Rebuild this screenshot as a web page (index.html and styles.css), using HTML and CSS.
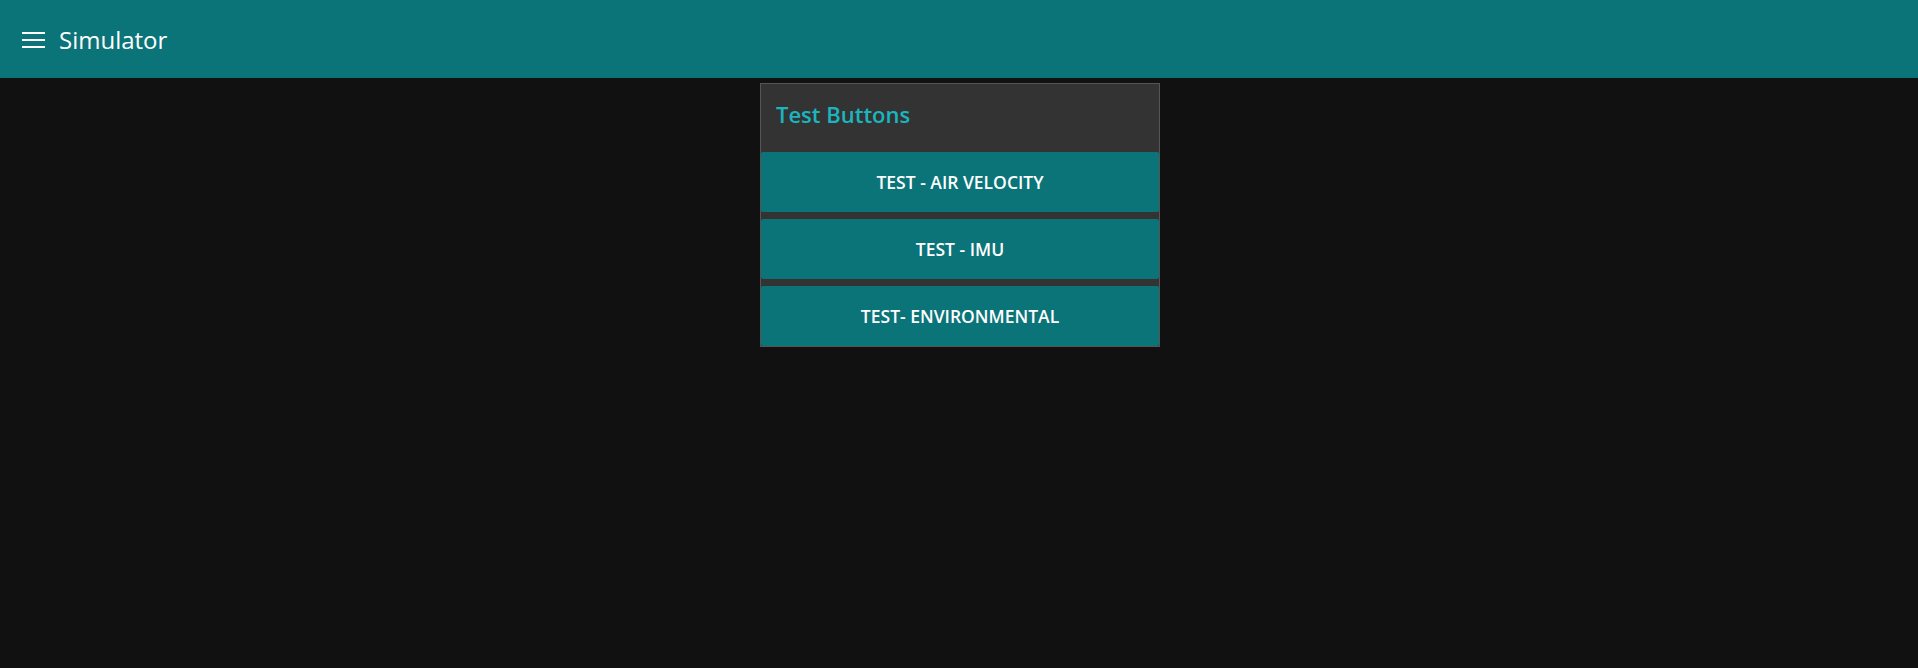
FILE: index.html
```html
<!DOCTYPE html>
<html>
<head>
<meta charset="utf-8">
<link rel="stylesheet" href="styles.css">
</head>
<body>
<header class="appbar">
  <svg class="menu-icon" width="23" height="16" viewBox="0 0 23 16">
    <rect x="0" y="0" width="23" height="2" fill="#ffffff"/>
    <rect x="0" y="7" width="23" height="2" fill="#ffffff"/>
    <rect x="0" y="14" width="23" height="2" fill="#ffffff"/>
  </svg>
  <span class="app-title">Simulator</span>
</header>
<main class="content">
  <section class="card">
    <div class="card-header">Test Buttons</div>
    <div class="buttons">
      <button class="btn">TEST - AIR VELOCITY</button>
      <button class="btn">TEST - IMU</button>
      <button class="btn">TEST- ENVIRONMENTAL</button>
    </div>
  </section>
</main>
</body>
</html>
```
FILE: styles.css
```css
html, body {
  margin: 0;
  padding: 0;
  background: #111111;
  font-family: "Open Sans", "Noto Sans", sans-serif;
  height: 100%;
}
.appbar {
  height: 78px;
  background: #0a7479;
  display: flex;
  align-items: center;
  padding-left: 22px;
  box-sizing: border-box;
}
.menu-icon {
  display: block;
  margin-right: 14px;
  margin-top: 1px;
}
.app-title {
  color: #ffffff;
  font-size: 24px;
}
.content {
  display: flex;
  justify-content: center;
  padding-top: 5px;
}
.card {
  width: 400px;
  box-sizing: border-box;
  background: #333333;
  border: 1px solid #555555;
  margin-left: 2px;
}
.card-header {
  height: 68px;
  box-sizing: border-box;
  display: flex;
  align-items: center;
  padding-left: 15px;
  padding-bottom: 8px;
  color: #1cb4bf;
  font-size: 22px;
  font-weight: 600;
}
.buttons {
  display: flex;
  flex-direction: column;
  gap: 7px;
}
.btn {
  height: 60px;
  border: none;
  border-radius: 2px;
  background: #0a7479;
  color: #ffffff;
  font-family: "Open Sans", "Noto Sans", sans-serif;
  font-size: 17.5px;
  font-weight: 600;
  padding: 0;
  cursor: pointer;
}
```
